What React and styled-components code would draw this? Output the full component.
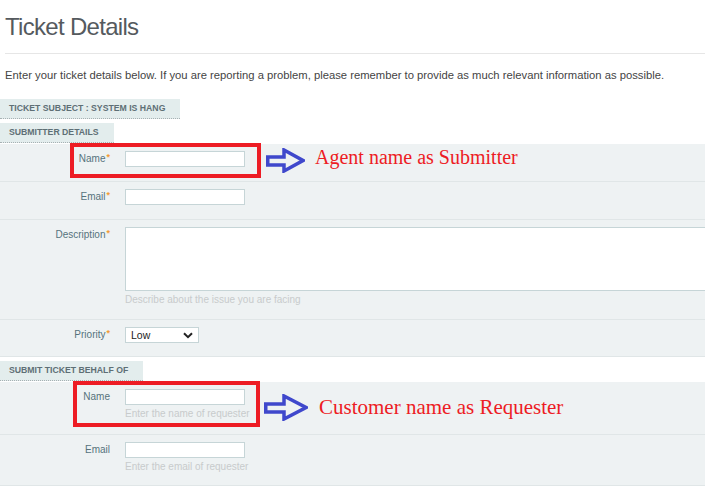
import React from "react";
import styled, { createGlobalStyle } from "styled-components";

const GlobalStyle = createGlobalStyle`
  html, body {
    margin: 0;
    padding: 0;
    background: #fff;
  }
  body {
    font-family: "Liberation Sans", Arial, sans-serif;
    overflow: hidden;
  }
`;

function Arrow({ x, y, w, h }) {
  const shaftTop = Math.round(h * 0.37);
  const shaftBottom = Math.round(h * 0.67);
  const headX = Math.round(w * 0.45);
  return (
    <ArrowSvg $x={x} $y={y} width={w} height={h} viewBox={`0 0 ${w} ${h}`}>
      <path
        d={`M1.75 ${shaftTop} H${headX} V2 L${w - 2} ${h / 2} L${headX} ${
          h - 2
        } V${shaftBottom} H1.75 Z`}
        fill="none"
        stroke="#3f48cc"
        strokeWidth="3.5"
        strokeLinejoin="miter"
      />
    </ArrowSvg>
  );
}

function Chevron() {
  return (
    <svg width="10" height="7" viewBox="0 0 10 7">
      <path d="M1 1.2 L5 5.2 L9 1.2" fill="none" stroke="#222" strokeWidth="2" />
    </svg>
  );
}

function App() {
  return (
    <Page>
      <GlobalStyle />
      <Header>
        <Title>Ticket Details</Title>
      </Header>
      <Intro>
        Enter your ticket details below. If you are reporting a problem, please
        remember to provide as much relevant information as possible.
      </Intro>

      <Tab $mt={17}>Ticket Subject : System is hang</Tab>
      <Tab $mt={4}>Submitter Details</Tab>
      <Rows>
        <Row $h={38}>
          <Label>
            Name<Req>*</Req>
          </Label>
          <Field>
            <Input />
          </Field>
          <RedBox $x={70} $y={-1} $w={191} $h={35} />
          <Arrow x={266} y={4} w={39} h={25} />
          <Note $x={315} $y={3} $size={20}>
            Agent name as Submitter
          </Note>
        </Row>
        <Row $h={38}>
          <Label>
            Email<Req>*</Req>
          </Label>
          <Field>
            <Input />
          </Field>
        </Row>
        <Row $h={100}>
          <Label>
            Description<Req>*</Req>
          </Label>
          <Field>
            <TextArea />
            <Hint>Describe about the issue you are facing</Hint>
          </Field>
        </Row>
        <Row $h={37}>
          <Label>
            Priority<Req>*</Req>
          </Label>
          <Field>
            <SelectBox>
              <span>Low</span>
              <Chevron />
            </SelectBox>
          </Field>
        </Row>
      </Rows>

      <Tab $mt={4}>Submit Ticket Behalf Of</Tab>
      <Rows>
        <Row $h={53}>
          <Label>Name</Label>
          <Field>
            <Input />
            <Hint>Enter the name of requester</Hint>
          </Field>
          <RedBox $x={73} $y={-1} $w={187} $h={46} />
          <Arrow x={264} y={12} w={44} h={27} />
          <Note $x={319} $y={15} $size={21}>
            Customer name as Requester
          </Note>
        </Row>
        <Row $h={51}>
          <Label>Email</Label>
          <Field>
            <Input />
            <Hint>Enter the email of requester</Hint>
          </Field>
        </Row>
      </Rows>
    </Page>
  );
}

export default App;

const Page = styled.div`
  width: 705px;
  height: 490px;
  overflow: hidden;
  background: #fff;
`;

const Header = styled.div`
  margin-left: 5px;
  padding: 13px 0 13px;
  border-bottom: 1px solid #e6e6e6;
`;

const Title = styled.h1`
  margin: 0;
  font-size: 24px;
  line-height: 27px;
  font-weight: normal;
  letter-spacing: -0.7px;
  color: #555a5e;
`;

const Intro = styled.p`
  margin: 15px 0 0 5px;
  font-size: 11.25px;
  line-height: 13px;
  color: #444;
  white-space: nowrap;
`;

const Tab = styled.div`
  width: fit-content;
  margin-top: ${(p) => p.$mt}px;
  padding: 0 15px 0 9px;
  height: 19px;
  line-height: 19px;
  background: #e3eded;
  border-bottom: 1px dotted #a7b1b3;
  font-size: 8.7px;
  font-weight: bold;
  text-transform: uppercase;
  color: #5e6f75;
`;

const Rows = styled.div`
  margin-top: 1px;
`;

const Row = styled.div`
  position: relative;
  display: flex;
  align-items: flex-start;
  box-sizing: border-box;
  min-height: ${(p) => p.$h}px;
  padding-top: 7px;
  background: #eef2f3;
  border-bottom: 1px solid #e0e6e7;
`;

const Label = styled.div`
  flex-shrink: 0;
  width: 110px;
  padding-top: 2px;
  text-align: right;
  font-size: 10px;
  line-height: 12px;
  color: #56727c;
`;

const Req = styled.span`
  color: #f39c34;
  font-size: 9px;
  font-weight: bold;
  vertical-align: top;
  line-height: 9px;
  margin-left: 1px;
`;

const Field = styled.div`
  display: flex;
  flex-direction: column;
  margin-left: 15px;
`;

const Input = styled.input`
  width: 120px;
  height: 16px;
  box-sizing: border-box;
  margin: 0;
  padding: 0 4px;
  border: 1px solid #c6d5d7;
  background: #fff;
  font-size: 10px;
  outline: none;
`;

const TextArea = styled.textarea`
  display: block;
  width: 600px;
  height: 64px;
  box-sizing: border-box;
  margin: 0;
  border: 1px solid #c6d5d7;
  background: #fff;
  resize: none;
  outline: none;
`;

const Hint = styled.div`
  margin-top: 3px;
  font-size: 10px;
  line-height: 12px;
  color: #c8cbcc;
  white-space: nowrap;
`;

const SelectBox = styled.div`
  display: flex;
  align-items: center;
  justify-content: space-between;
  width: 74px;
  height: 16px;
  box-sizing: border-box;
  padding: 0 5px 0 5px;
  border: 1px solid #c6d5d7;
  background: #fff;
  font-size: 10.5px;
  color: #222;
`;

const RedBox = styled.div`
  position: absolute;
  left: ${(p) => p.$x}px;
  top: ${(p) => p.$y}px;
  width: ${(p) => p.$w}px;
  height: ${(p) => p.$h}px;
  box-sizing: border-box;
  border: 4px solid #ed1c24;
  pointer-events: none;
`;

const ArrowSvg = styled.svg`
  position: absolute;
  left: ${(p) => p.$x}px;
  top: ${(p) => p.$y}px;
`;

const Note = styled.div`
  position: absolute;
  left: ${(p) => p.$x}px;
  top: ${(p) => p.$y}px;
  font-family: "Liberation Serif", "Times New Roman", serif;
  font-size: ${(p) => p.$size}px;
  line-height: 1;
  color: #ed1c24;
  white-space: nowrap;
`;
